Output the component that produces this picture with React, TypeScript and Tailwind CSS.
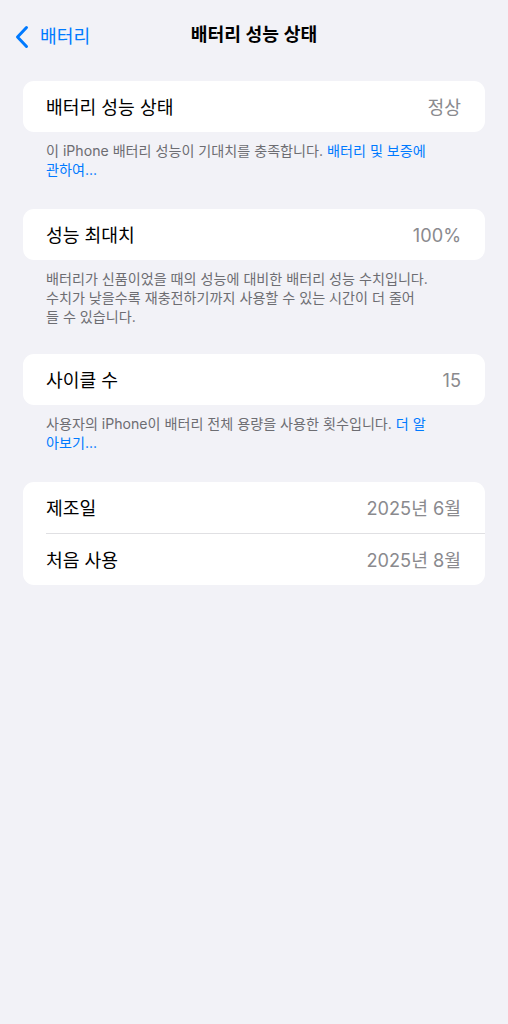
import React from "react";

const font = { fontFamily: 'Inter, "Noto Sans CJK KR", sans-serif' };

function Row({ label, value }: { label: string; value: string }) {
  return (
    <div className="flex h-[51px] items-center justify-between pl-[23px] pr-[24px] pt-[2px]">
      <span className="text-[18.2px] text-black">{label}</span>
      <span className="text-[18.2px] text-[#8a8a8e]">{value}</span>
    </div>
  );
}

function Card({ children }: { children: React.ReactNode }) {
  return <div className="overflow-hidden rounded-[11px] bg-white">{children}</div>;
}

function Footer({ children }: { children: React.ReactNode }) {
  return (
    <div className="mt-[9px] pl-[23px] pr-[10px] text-[14.1px] leading-[19px] text-[#6d6d72] whitespace-nowrap">
      {children}
    </div>
  );
}

export default function App() {
  return (
    <div className="min-h-[1024px] w-full bg-[#f2f2f7]" style={font}>
      <div className="relative flex h-[70px] items-center">
        <div className="absolute left-[14px] top-[23px] flex items-center">
          <svg width="16" height="24" viewBox="0 0 16 24" fill="none">
            <path
              d="M12.5 2.5 L3.5 12 L12.5 21.5"
              stroke="#007aff"
              strokeWidth="3"
              strokeLinecap="round"
              strokeLinejoin="round"
            />
          </svg>
          <span className="ml-[10px] text-[18.2px] text-[#007aff]">배터리</span>
        </div>
        <div className="absolute left-0 right-0 top-[23px] flex h-[24px] items-center justify-center">
          <span className="text-[18.2px] font-semibold text-black">배터리 성능 상태</span>
        </div>
      </div>

      <div className="px-[23px] pt-[11px]">
        <Card>
          <Row label="배터리 성능 상태" value="정상" />
        </Card>
        <Footer>
          <div>
            이 iPhone 배터리 성능이 기대치를 충족합니다.{" "}
            <span className="text-[#007aff]">배터리 및 보증에</span>
          </div>
          <div className="text-[#007aff]">관하여...</div>
        </Footer>

        <div className="mt-[30px]">
          <Card>
            <Row label="성능 최대치" value="100%" />
          </Card>
          <Footer>
            <div>배터리가 신품이었을 때의 성능에 대비한 배터리 성능 수치입니다.</div>
            <div>수치가 낮을수록 재충전하기까지 사용할 수 있는 시간이 더 줄어</div>
            <div>들 수 있습니다.</div>
          </Footer>
        </div>

        <div className="mt-[28px]">
          <Card>
            <Row label="사이클 수" value="15" />
          </Card>
          <Footer>
            <div>
              사용자의 iPhone이 배터리 전체 용량을 사용한 횟수입니다.{" "}
              <span className="text-[#007aff]">더 알</span>
            </div>
            <div className="text-[#007aff]">아보기...</div>
          </Footer>
        </div>

        <div className="mt-[30px]">
          <Card>
            <Row label="제조일" value="2025년 6월" />
            <div className="ml-[23px] h-px bg-[#e0e0e3]" />
            <Row label="처음 사용" value="2025년 8월" />
          </Card>
        </div>
      </div>
    </div>
  );
}
